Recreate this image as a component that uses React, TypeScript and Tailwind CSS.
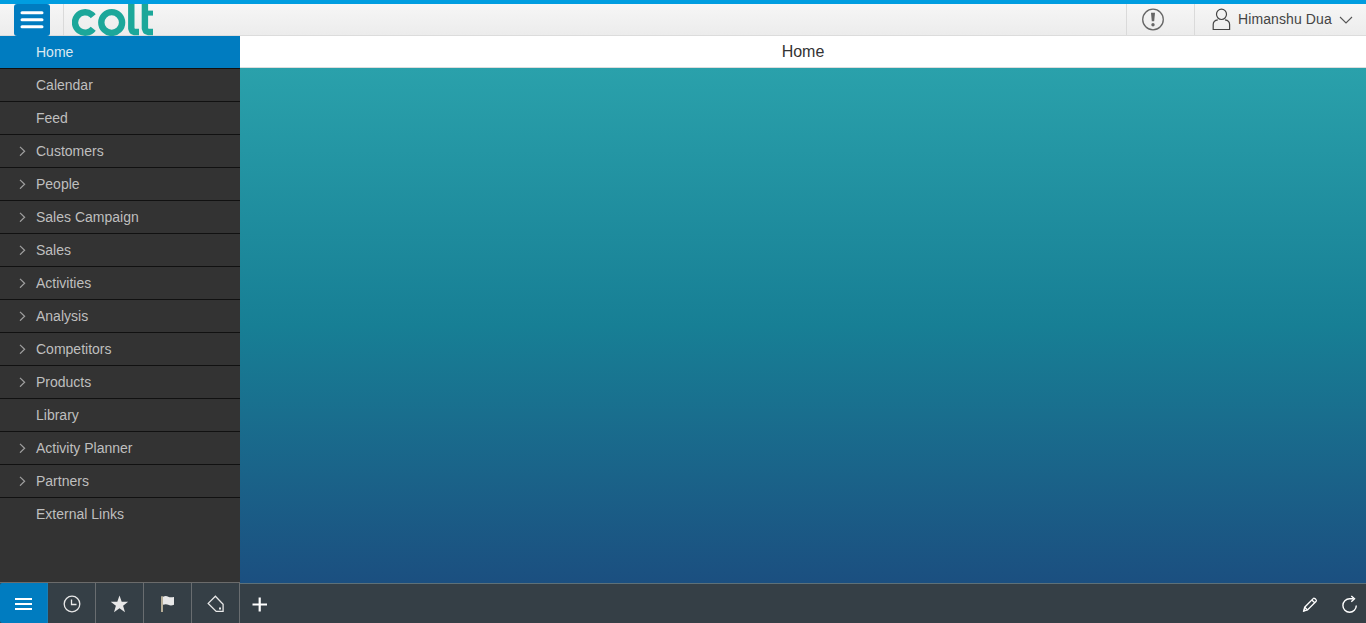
import React from "react";

const items: { label: string; expandable?: boolean }[] = [
  { label: "Home" },
  { label: "Calendar" },
  { label: "Feed" },
  { label: "Customers", expandable: true },
  { label: "People", expandable: true },
  { label: "Sales Campaign", expandable: true },
  { label: "Sales", expandable: true },
  { label: "Activities", expandable: true },
  { label: "Analysis", expandable: true },
  { label: "Competitors", expandable: true },
  { label: "Products", expandable: true },
  { label: "Library" },
  { label: "Activity Planner", expandable: true },
  { label: "Partners", expandable: true },
  { label: "External Links" },
];

function Logo() {
  return (
    <svg width="81" height="32" viewBox="72 4 81 32" role="img" aria-label="colt" className="ml-2 block" fill="none" stroke="#1ca79a" strokeWidth="6.4">
      <circle cx="85.2" cy="22.5" r="10.2" pathLength="360" strokeDasharray="284 76" transform="rotate(38 85.2 22.5)" />
      <circle cx="111.7" cy="22.5" r="10.4" />
      <polyline points="131.3,0 131.3,28.5 132.3,31 134.5,32 139,32" strokeLinejoin="round" />
      <polyline points="144.9,0 144.9,28.3 145.9,31 148.5,32 153,32" strokeLinejoin="round" />
      <line x1="144.9" y1="13.1" x2="153" y2="13.1" strokeWidth="5" />
    </svg>
  );
}

function Header() {
  return (
    <header className="flex h-9 shrink-0 border-t-4 border-b border-t-[#009de0] border-b-[#dcdcdc] bg-gradient-to-b from-[#f6f6f6] to-[#ececec]">
      <button aria-label="Menu" className="ml-3.5 flex h-8 w-9 items-start justify-center rounded-[3px] bg-[#007cc0] pt-[7px]">
        <svg width="24" height="18" viewBox="0 0 24 18" stroke="#fff" strokeWidth="3" strokeLinecap="round">
          <path d="M2 1.7h20M2 8.7h20M2 15.7h20" />
        </svg>
      </button>
      <div className="ml-[13px] flex h-8 border-l border-[#dadada]">
        <Logo />
      </div>
      <div className="ml-auto flex">
        <div className="w-[68px] border-l border-[#dadada] pt-1 pl-[15px]">
          <svg width="23" height="23" viewBox="0 0 23 23" fill="none" stroke="#666">
            <circle cx="11" cy="11.5" r="10.3" strokeWidth="1.3" />
            <path d="M9 4.8h4l-.8 8.4h-2.4z" fill="#666" stroke="none" />
            <circle cx="11" cy="16.8" r="1.7" fill="#666" stroke="none" />
          </svg>
        </div>
        <div className="flex w-[172px] border-l border-[#dadada] pl-[17px]">
          <svg width="19" height="23" viewBox="0 0 19 23" className="mt-1 shrink-0" fill="none" stroke="#444" strokeWidth="1.2">
            <ellipse cx="9.5" cy="6.3" rx="5" ry="5.2" />
            <path d="M5.8 11.8C2.8 12.2 1.2 14 1.2 16.5v5h16.4v-5c0-2.5-1.6-4.3-4.6-4.7" />
          </svg>
          <span className="ml-[7px] w-[93px] pt-[5px] text-[14px] leading-5 tracking-[0.1px] whitespace-nowrap text-[#444]">Himanshu Dua</span>
          <svg width="14" height="8" viewBox="0 0 14 8" className="mt-3 ml-2 shrink-0" fill="none" stroke="#555" strokeWidth="1.1">
            <path d="M1 1l6 6 6-6" />
          </svg>
        </div>
      </div>
    </header>
  );
}

function Sidebar() {
  return (
    <nav className="w-60 shrink-0 bg-[#333]">
      {items.map((item, i) => (
        <div
          key={item.label}
          className={`flex h-[33px] items-center text-[14px] ${i === 0 ? "bg-[#007cc0] text-[#dce9f1]" : "text-[#bfbfbf]"} ${i < items.length - 1 ? "border-b border-[#111]" : ""}`}
        >
          <span className="flex w-9 pl-[18px]">
            {item.expandable && (
              <svg width="9" height="10" viewBox="0 0 9 10" fill="none" stroke="#a0a0a0" strokeWidth="1.2">
                <path d="M2 .9l4.6 4.4L2 9.7" />
              </svg>
            )}
          </span>
          <span>{item.label}</span>
        </div>
      ))}
    </nav>
  );
}

const tab = "flex w-12 items-center justify-center border-r border-[#696d70] pt-[2px]";

function Footer() {
  return (
    <footer className="flex h-[41px] shrink-0 bg-[#353f46]">
      <div className="flex w-60 border-t border-[#6b6b6b]">
        <div className="flex w-12 items-center justify-center rounded-l-[2px] border-r border-[#167fb9] bg-[#007cc0] pt-[2px]">
          <svg width="17" height="12" viewBox="0 0 17 12" stroke="#fff" strokeWidth="2">
            <path d="M0 1h17M0 6h17M0 11h17" />
          </svg>
        </div>
        <div className={tab}>
          <svg width="18" height="18" viewBox="0 0 18 18" fill="none" stroke="#e8e8e8" strokeWidth="1.3">
            <circle cx="9" cy="9" r="7.8" />
            <path d="M8.5 4.5V9.5h5" />
          </svg>
        </div>
        <div className={tab}>
          <svg width="18" height="18" viewBox="0 0 18 18" fill="#e8e8e8">
            <path d="M8.5 .5l2.2 6.3h6.4l-5 3.9 1.9 6.5-5.5-3.9-5.5 3.9 1.9-6.5-5-3.9h6.4z" />
          </svg>
        </div>
        <div className={tab}>
          <svg width="16" height="18" viewBox="0 0 16 18">
            <path d="M2 1.2v15.8" stroke="#e3d4b3" strokeWidth="1.5" />
            <path d="M3 1.8c2-1 3.8-.8 5.2-.1 1.8.9 3.4.8 5.8.2v7.8c-2.4 1-4 .8-5.8.1-1.4-.7-3.2-.7-5.2 0z" fill="#e8e8e8" />
          </svg>
        </div>
        <div className={tab}>
          <svg width="18" height="18" viewBox="0 0 18 18" fill="none" stroke="#e8e8e8" strokeWidth="1.3">
            <path d="M1.2 8.4l7.2-7.2 7.7 8v7.2H9.2z" />
            <rect x="12" y="12.5" width="2" height="2" fill="#e8e8e8" stroke="none" />
          </svg>
        </div>
      </div>
      <div className="mt-px flex flex-1 items-center border-t border-[#5d7078]">
        <svg width="15" height="15" viewBox="0 0 15 15" className="mt-px ml-3" stroke="#fff" strokeWidth="2.2">
          <path d="M7.7 .5v14M.5 7.5h14.5" />
        </svg>
        <svg width="16" height="17" viewBox="0 0 16 17" className="mt-px ml-auto" fill="none" stroke="#fff" strokeWidth="1.3">
          <path d="M1.7 15l1-3.8 8.7-8.8c.8-.9 3.8 1.6 2.8 2.8L5.5 14z" />
          <path d="M9.8 4l3 2.8M2.7 11.2L5.5 14" />
          <path d="M1 15.8l1-3 2 2z" fill="#fff" stroke="none" />
        </svg>
        <svg width="17" height="18" viewBox="0 0 17 18" className="mr-2 ml-[23px]" fill="none" stroke="#fff" strokeWidth="1.4">
          <path d="M12.5 3.8H8.6a6.7 6.7 0 1 0 6.7 6.7" />
          <path d="M10.3 .9l3.2 2.9-3.2 2.9" />
        </svg>
      </div>
    </footer>
  );
}

export default function App() {
  return (
    <div className="flex h-[623px] w-full flex-col overflow-hidden font-['Liberation_Sans',Arial,sans-serif]">
      <Header />
      <div className="flex min-h-0 flex-1">
        <Sidebar />
        <main className="flex flex-1 flex-col">
          <h1 className="h-8 shrink-0 border-b border-[#ddd] bg-white text-center text-base leading-[31px] text-[#333]">Home</h1>
          <div className="relative -mb-px flex-1 bg-gradient-to-b from-[#2aa1ab] via-[#177f95] via-50% to-[#1b4f80]" />
        </main>
      </div>
      <Footer />
    </div>
  );
}
